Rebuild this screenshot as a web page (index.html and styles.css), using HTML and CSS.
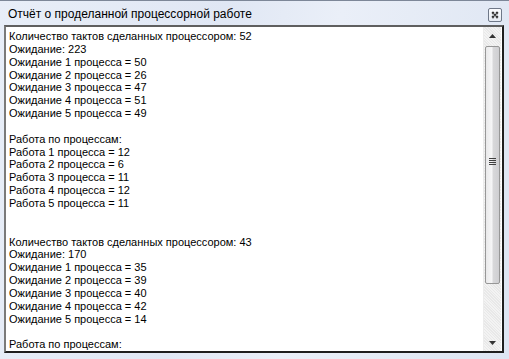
FILE: index.html
```html
<!DOCTYPE html>
<html lang="ru">
<head>
<meta charset="utf-8">
<title>Отчёт</title>
<link rel="stylesheet" href="styles.css">
</head>
<body>
<div class="window">
  <div class="titlebar">
    <span class="title">Отчёт о проделанной процессорной работе</span>
    <div class="close">
      <svg width="8" height="8" viewBox="0 0 8 8"><path d="M1 1L7 7M7 1L1 7M1 3L3 1M5 1L7 3M7 5L5 7M3 7L1 5" stroke="#333" stroke-width="1.3" fill="none"/></svg>
    </div>
  </div>
  <div class="textbox">
    <div class="content">Количество тактов сделанных процессором: 52
Ожидание: 223
Ожидание 1 процесса = 50
Ожидание 2 процесса = 26
Ожидание 3 процесса = 47
Ожидание 4 процесса = 51
Ожидание 5 процесса = 49

Работа по процессам:
Работа 1 процесса = 12
Работа 2 процесса = 6
Работа 3 процесса = 11
Работа 4 процесса = 12
Работа 5 процесса = 11


Количество тактов сделанных процессором: 43
Ожидание: 170
Ожидание 1 процесса = 35
Ожидание 2 процесса = 39
Ожидание 3 процесса = 40
Ожидание 4 процесса = 42
Ожидание 5 процесса = 14

Работа по процессам:</div>
    <div class="scrollbar">
      <div class="sb-btn">
        <svg width="7" height="4" viewBox="0 0 7 4"><path d="M0 4L3.5 0L7 4Z" fill="#333"/></svg>
      </div>
      <div class="sb-track">
        <div class="sb-thumb">
          <div class="grip"><span></span><span></span><span></span><span></span></div>
        </div>
      </div>
      <div class="sb-btn">
        <svg width="7" height="4" viewBox="0 0 7 4"><path d="M0 0L7 0L3.5 4Z" fill="#333"/></svg>
      </div>
    </div>
  </div>
</div>
</body>
</html>
```
FILE: styles.css
```css
html, body {
  margin: 0;
  padding: 0;
}
body {
  width: 509px;
  height: 359px;
  overflow: hidden;
}
.window {
  width: 509px;
  height: 359px;
  box-sizing: border-box;
  border-top: 1px solid #7d8798;
  background: linear-gradient(100deg, #e8eef8 0%, #e0e7f4 40%, #eaeff8 60%, #dde5f2 100%);
  display: flex;
  flex-direction: column;
}
.titlebar {
  height: 24px;
  display: flex;
  align-items: center;
  justify-content: space-between;
  padding: 0 7px 0 8px;
}
.title {
  font-family: "Liberation Sans", Arial, sans-serif;
  font-size: 12px;
  color: #000;
  margin-top: 1px;
}
.close {
  width: 14px;
  height: 14px;
  box-sizing: border-box;
  border: 1px solid #6f7888;
  border-radius: 2px;
  background: linear-gradient(#fbfcfe, #e6ebf3);
  display: flex;
  align-items: center;
  justify-content: center;
  margin-top: 3px;
}
.textbox {
  margin: 0 5px 6px 4px;
  flex: 1;
  display: flex;
  background: #fff;
  border-style: solid;
  border-width: 2px;
  border-color: #5f5f5f #1e1e1e #1e1e1e #7a7a7a;
  box-shadow: inset -1px -1px 0 #ffffff;
  overflow: hidden;
}
.content {
  flex: 1;
  padding: 3px 0 0 3px;
  font-family: "Liberation Sans", Arial, sans-serif;
  font-size: 11px;
  line-height: 12.85px;
  color: #000;
  white-space: pre-line;
  overflow: hidden;
}
.scrollbar {
  width: 17px;
  margin-right: 1px;
  display: flex;
  flex-direction: column;
  background: repeating-linear-gradient(45deg, #f3f3f3 0 1px, #e8e8e8 1px 2px);
  border-left: 1px solid #ececec;
}
.sb-btn {
  height: 17px;
  display: flex;
  align-items: center;
  justify-content: center;
}
.sb-track {
  flex: 1;
  padding-top: 2px;
  display: flex;
  flex-direction: column;
}
.sb-thumb {
  height: 238px;
  margin: 0 1px;
  box-sizing: border-box;
  border: 1px solid #979797;
  border-radius: 2px;
  background: linear-gradient(90deg, #e9e9ea 0%, #f6f6f7 45%, #d8d8da 55%, #cfcfd2 100%);
  display: flex;
  align-items: center;
  justify-content: center;
}
.grip {
  display: flex;
  flex-direction: column;
  gap: 1px;
  margin-top: -8px;
}
.grip span {
  display: block;
  width: 7px;
  height: 1px;
  background: #404040;
}
```
